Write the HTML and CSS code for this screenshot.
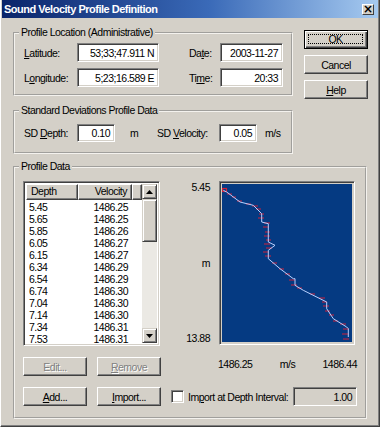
FILE: index.html
```html
<!DOCTYPE html>
<html>
<head>
<meta charset="utf-8">
<link rel="stylesheet" href="styles.css">
</head>
<body>
<div class="window">
  <div class="titlebar">
    <span class="title">Sound Velocity Profile Definition</span>
    <span class="close">×</span>
  </div>
  <div class="content">
    <div class="top">
      <div class="leftcol">
        <fieldset class="group g1">
          <legend>Profile Location (Administrative)</legend>
          <div class="grid1">
            <label><u>L</u>atitude:</label>
            <div class="input">53;33;47.911 N</div>
            <span></span>
            <label>Da<u>t</u>e:</label>
            <div class="input">2003-11-27</div>
            <label>L<u>o</u>ngitude:</label>
            <div class="input">5;23;16.589 E</div>
            <span></span>
            <label>Ti<u>m</u>e:</label>
            <div class="input">20:33</div>
          </div>
        </fieldset>
        <fieldset class="group g2">
          <legend>Standard Deviations Profile Data</legend>
          <div class="grid2">
            <label>SD <u>D</u>epth:</label>
            <div class="input">0.10</div>
            <span></span>
            <span>m</span>
            <label>SD <u>V</u>elocity:</label>
            <div class="input">0.05</div>
            <span></span>
            <span>m/s</span>
          </div>
        </fieldset>
      </div>
      <div class="btncol">
        <div class="btn default"><span class="focus">OK</span></div>
        <div class="btn">Cancel</div>
        <div class="btn"><u>H</u>elp</div>
      </div>
    </div>
    <fieldset class="group g3">
      <legend>Profile Data</legend>
      <div class="row1">
        <div class="list">
          <div class="listmain">
            <div class="lhead">
              <div class="hcell h1">Depth</div>
              <div class="hcell h2">Velocity</div>
              <div class="hcell h3"></div>
            </div>
            <div class="rows">
              <div class="r"><span>5.45</span><span>1486.25</span></div>
              <div class="r"><span>5.65</span><span>1486.25</span></div>
              <div class="r"><span>5.85</span><span>1486.26</span></div>
              <div class="r"><span>6.05</span><span>1486.27</span></div>
              <div class="r"><span>6.15</span><span>1486.27</span></div>
              <div class="r"><span>6.34</span><span>1486.29</span></div>
              <div class="r"><span>6.54</span><span>1486.29</span></div>
              <div class="r"><span>6.74</span><span>1486.30</span></div>
              <div class="r"><span>7.04</span><span>1486.30</span></div>
              <div class="r"><span>7.14</span><span>1486.30</span></div>
              <div class="r"><span>7.34</span><span>1486.31</span></div>
              <div class="r"><span>7.53</span><span>1486.31</span></div>
              <div class="r"><span>7.73</span><span>1486.33</span></div>
            </div>
          </div>
          <div class="scrollbar">
            <div class="sbtn"><svg width="7" height="4" viewBox="0 0 7 4"><path d="M3.5 0 L7 4 L0 4 Z" fill="#000"/></svg></div>
            <div class="thumb"></div>
            <div class="track"></div>
            <div class="sbtn"><svg width="7" height="4" viewBox="0 0 7 4"><path d="M0 0 L7 0 L3.5 4 Z" fill="#000"/></svg></div>
          </div>
        </div>
        <div class="ylabels">
          <span>5.45</span>
          <span>m</span>
          <span>13.88</span>
        </div>
        <div class="chart">
          <svg width="130" height="158" viewBox="0 0 130 158">
            <rect width="130" height="158" fill="#053a82"/>
            <g stroke="#d0203a" stroke-width="1.2" fill="none">
              <rect x="0.5" y="4.5" width="4" height="3"/>
              <path d="M5 10h5 M10 13h4 M15 17h5 M24 20h5 M30 22h6 M34 25h5 M37 30h5 M36 34h6 M42 39h6 M41 43h6 M43 48h5 M42 52h6 M44 56h5 M42 60h6 M44 64h6 M41 68h6 M43 72h6 M50 79h5 M57 85h5 M63 90h5 M67 96h6 M69 101h6 M75 104h5 M88 110h5 M97 114h6 M100 118h5 M101 122h6 M103 127h5 M107 131h5 M111 137h5 M118 140h6 M121 145h6 M120 150h7 M121 155h6"/>
            </g>
            <polyline fill="none" stroke="#b8d0ff" stroke-width="1" points="1.3,6.3 4.7,8 18,18 31.3,21.3 38,28 39.7,29.7 39.7,38 46.3,39.7 46.3,58 53,61.3 46.3,66.3 46.3,74.7 58,84.7 71.3,94.7 73,94.7 73,101.3 81.3,106.3 98,114.7 104.7,118 104.7,124.7 111.3,134.7 124.7,143 126.3,144.7 126.3,153"/>
          </svg>
        </div>
      </div>
      <div class="row2">
        <div class="btn disabled">Edit...</div>
        <div class="btn disabled"><u>R</u>emove</div>
        <div class="xvals">
          <span>1486.25</span>
          <span>m/s</span>
          <span>1486.44</span>
        </div>
      </div>
      <div class="row3">
        <div class="btn"><u>A</u>dd...</div>
        <div class="btn"><u>I</u>mport...</div>
        <div class="check"></div>
        <span class="clabel">Im<u>p</u>ort at Depth Interval:</span>
        <div class="input dis">1.00</div>
      </div>
    </fieldset>
  </div>
</div>
</body>
</html>
```

FILE: styles.css
```css
* { box-sizing: border-box; }
html, body { margin: 0; padding: 0; background: #d4d0c8; }
body {
  font-family: "Liberation Sans", Arial, sans-serif;
  font-size: 10.5px;
  letter-spacing: -0.5px;
  color: #000;
}
u { text-decoration: underline; text-underline-offset: 1px; }
.window {
  width: 380px;
  height: 427px;
  background: #d4d0c8;
  border-left: 1px solid #fff;
  border-right: 1px solid #404040;
  border-bottom: 1px solid #404040;
  box-shadow: inset -1px -1px 0 #808080;
  padding: 0 1px 1px 1px;
  overflow: hidden;
}
.titlebar {
  height: 18px;
  background: linear-gradient(to right, #0a246a, #3a6ab8 55%, #a6caf0);
  display: flex;
  align-items: center;
  justify-content: space-between;
  padding: 0 4px 0 2px;
}
.title {
  color: #fff;
  font-weight: bold;
  font-size: 11px;
  letter-spacing: -0.5px;
}
.close {
  width: 12px;
  height: 11px;
  background: #d4d0c8;
  border: 1px solid;
  border-color: #fff #404040 #404040 #fff;
  font-size: 12px;
  font-weight: bold;
  line-height: 8px;
  text-align: center;
  letter-spacing: 0;
  font-family: "DejaVu Sans", sans-serif;
}
.content {
  padding: 8px 0 0 11px;
}
.top { display: flex; }
.leftcol { width: 280px; }
.group {
  margin: 0;
  border: 2px groove #f4f2ee;
  padding: 0;
  min-width: 0;
}
legend {
  padding: 0 2px;
  margin-left: -5px;
  line-height: 13px;
  color: #000;
}
.g1 { padding: 4px 0 6px 9px; height: 70px; }
.grid1 {
  display: grid;
  grid-template-columns: 53px 82px 30px 31px 63px;
  grid-auto-rows: 19px;
  row-gap: 6px;
  align-items: center;
  white-space: nowrap;
}
.input {
  background: #fff;
  border: 1px solid;
  border-color: #808080 #fff #fff #808080;
  box-shadow: inset 1px 1px 0 #404040, inset -1px -1px 0 #d4d0c8;
  height: 100%;
  padding: 0 4px 0 2px;
  display: flex;
  align-items: center;
  justify-content: flex-end;
  white-space: nowrap;
  overflow: hidden;
}
.input.dis { background: #d4d0c8; }
.g2 { margin-top: 8px; padding: 7px 0 9px 9px; height: 50px; }
.grid2 {
  display: grid;
  grid-template-columns: 53px 38px 15px 27px 62px 38px 8px 30px;
  grid-auto-rows: 18px;
  align-items: center;
  white-space: nowrap;
}
.btncol {
  margin-left: 11px;
  margin-top: 4px;
  display: flex;
  flex-direction: column;
  gap: 6px;
}
.btn {
  width: 64px;
  height: 19px;
  background: #d4d0c8;
  border: 1px solid;
  border-color: #fff #404040 #404040 #fff;
  box-shadow: inset -1px -1px 0 #808080;
  display: flex;
  align-items: center;
  justify-content: center;
  white-space: nowrap;
}
.btn.default {
  border: 1px solid #000;
  box-shadow: inset 1px 1px 0 #fff, inset -1px -1px 0 #404040, inset -2px -2px 0 #808080;
  padding: 3px 4px 4px 3px;
}
.focus {
  display: flex;
  align-items: center;
  justify-content: center;
  width: 100%;
  height: 100%;
  border: 1px dotted #000;
}
.btn.disabled {
  color: #808080;
  text-shadow: 1px 1px 0 #fff;
}
.g3 {
  margin-top: 6px;
  width: 354px;
  height: 259px;
  padding: 8px 0 0 8px;
}
.g3 legend { margin-left: -4px; }
.row1 { display: flex; }
.list {
  width: 137px;
  height: 165px;
  border: 1px solid;
  border-color: #808080 #fff #fff #808080;
  box-shadow: inset 1px 1px 0 #404040, inset -1px -1px 0 #d4d0c8;
  padding: 2px;
  background: #fff;
  display: flex;
  overflow: hidden;
}
.listmain { flex: 1; overflow: hidden; }
.lhead { display: flex; height: 16px; }
.hcell {
  background: #d4d0c8;
  border: 1px solid;
  border-color: #fff #404040 #404040 #fff;
  box-shadow: inset -1px -1px 0 #808080;
  height: 16px;
  line-height: 13px;
  padding: 0 4px;
}
.h1 { width: 52px; }
.h2 { width: 54px; text-align: right; }
.h3 { flex: 1; }
.rows { padding-top: 1px; }
.r {
  display: flex;
  height: 12px;
  line-height: 12px;
  padding-left: 3px;
}
.r span:first-child { width: 35px; }
.r span:last-child { width: 64px; text-align: right; }
.scrollbar {
  width: 15px;
  display: flex;
  flex-direction: column;
  background: #ebe9e4;
}
.sbtn, .thumb {
  background: #d4d0c8;
  border: 1px solid;
  border-color: #d4d0c8 #404040 #404040 #d4d0c8;
  box-shadow: inset 1px 1px 0 #fff, inset -1px -1px 0 #808080;
}
.sbtn {
  height: 15px;
  display: flex;
  align-items: center;
  justify-content: center;
}
.thumb { height: 43px; }
.track { flex: 1; }
.ylabels {
  width: 40px;
  margin-left: 10px;
  height: 165px;
  display: flex;
  flex-direction: column;
  justify-content: space-between;
  align-items: flex-end;
  padding: 0 0 1px;
}
.ylabels span { line-height: 13px; }
.chart {
  margin-left: 9px;
  width: 136px;
  height: 164px;
  background: #d4d0c8;
  border: 1px solid;
  border-color: #808080 #fff #fff #808080;
  box-shadow: inset 1px 1px 0 #404040;
  padding: 2px;
}
.chart svg { display: block; }
.row2 {
  display: flex;
  margin-top: 11px;
  gap: 10px;
  align-items: center;
}
.xvals {
  margin-left: 47px;
  width: 139px;
  display: flex;
  justify-content: space-between;
  margin-top: -5px;
}
.row3 {
  display: flex;
  margin-top: 11px;
  align-items: center;
}
.row3 .btn + .btn { margin-left: 10px; }
.check {
  margin-left: 10px;
  width: 13px;
  height: 13px;
  background: #fff;
  border: 1px solid;
  border-color: #808080 #fff #fff #808080;
  box-shadow: inset 1px 1px 0 #404040, inset -1px -1px 0 #d4d0c8;
}
.clabel { margin-left: 4px; width: 105px; white-space: nowrap; }
.row3 .input { width: 64px; height: 19px; }
```
